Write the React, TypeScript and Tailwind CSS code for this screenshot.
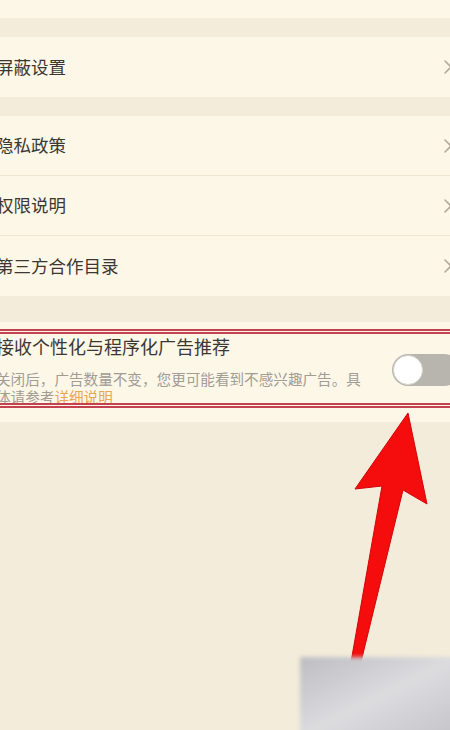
import React from 'react';

// ── Settings rows ─────────────────────────────────────────────────────────────
const GROUP_TWO = ['隐私政策', '权限说明', '第三方合作目录'] as const;

const FONT = { fontFamily: '"Noto Sans CJK SC", "Noto Sans", sans-serif' };

function Chevron() {
  return (
    <svg width="10" height="16" viewBox="0 0 10 16" className="shrink-0 -mr-[3px]" aria-hidden="true">
      <path d="M2 2 L8 8 L2 14" fill="none" stroke="#b3ab9c" strokeWidth="1.6" strokeLinecap="round" strokeLinejoin="round" />
    </svg>
  );
}

function Row({ label, divider }: { label: string; divider?: boolean }) {
  return (
    <div
      className={[
        'flex h-[60px] items-center justify-between bg-[#fdf7e8]',
        divider ? 'border-b border-[#efe6d2]' : '',
      ].join(' ')}
    >
      <span className="-ml-[4px] text-[17.5px] text-[#3b3733]">{label}</span>
      <Chevron />
    </div>
  );
}

export default function App() {
  return (
    <div className="relative h-[730px] w-[450px] overflow-hidden bg-[#f4ecdb]" style={FONT}>
      {/* tail of the previous group */}
      <div className="h-[18px] bg-[#fdf7e8]" />
      <div className="h-[19px]" />

      <Row label="屏蔽设置" />
      <div className="h-[19px]" />

      {GROUP_TWO.map((label, i) => (
        <Row key={label} label={label} divider={i < GROUP_TWO.length - 1} />
      ))}
      <div className="h-[26px]" />

      {/* ── Personalised ads toggle ─────────────────────────────────────── */}
      <div className="relative flex h-[100px] items-start justify-between bg-[#fdf7e8] pt-[11px]">
        <div className="-ml-[4px] flex flex-col">
          <span className="text-[18px] leading-[26px] text-[#3b3733]">接收个性化与程序化广告推荐</span>
          <div className="mt-[11px] flex flex-col whitespace-nowrap text-[14.6px] leading-[17.5px] text-[#a19c94]">
            <span>关闭后，广告数量不变，您更可能看到不感兴趣广告。具</span>
            <span>
              体请参考<span className="text-[#eba54f]">详细说明</span>
            </span>
          </div>
        </div>
        <div className="relative -mr-[10px] mt-[21px] h-[32px] w-[68px] shrink-0 rounded-full bg-[#b8b5af]">
          <div className="absolute left-[1px] top-[1px] h-[30px] w-[30px] rounded-full border border-[#d8d5cf] bg-white" />
        </div>

        {/* red highlight frame */}
        <div className="pointer-events-none absolute inset-x-0 top-[7px] h-[79px] border-y-[5px] border-double border-[#c4414f]" />
      </div>

      {/* ── Annotation arrow ──────────────────────────────────────────── */}
      <svg className="pointer-events-none absolute left-0 top-0" width="450" height="730" aria-hidden="true">
        <polygon
          points="408,413 427,504 403,490 361,662 351,662 382,486 355,489"
          fill="#f50d0d"
          stroke="#d10606"
          strokeWidth="1"
          strokeLinejoin="round"
        />
      </svg>

      {/* blurred watermark patch */}
      <div className="pointer-events-none absolute left-[300px] top-[657px] h-[80px] w-[160px] bg-gradient-to-br from-[#bdbdc2] via-[#dcdcdf] to-[#c4c4c8] blur-[2px]" />
    </div>
  );
}
